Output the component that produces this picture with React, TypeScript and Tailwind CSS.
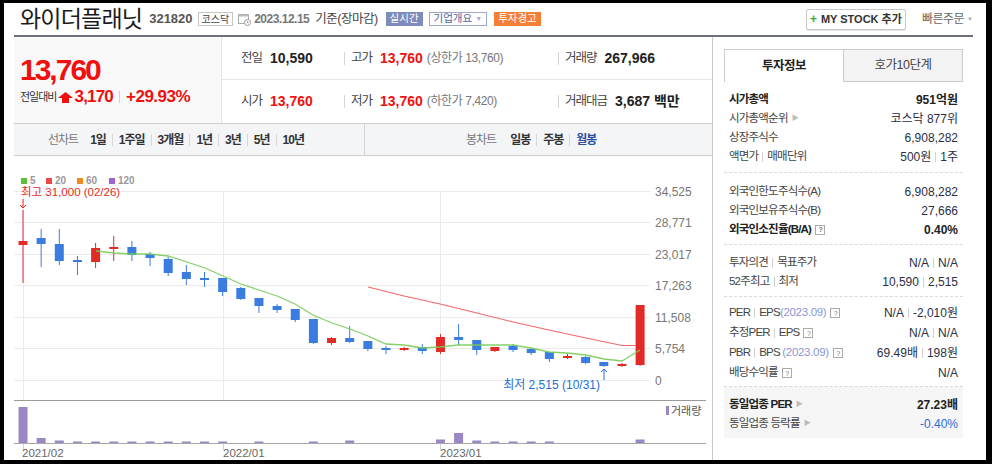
import React from "react";

// candle coords in chart pixels: [bodyTop, bodyBottom, wickTop, wickBottom, up]
const CANDLES: [number, number, number, number, boolean][] = [
  [241, 245, 210, 283, true],
  [238, 244, 229, 267, false],
  [244, 261, 229, 265, false],
  [260, 262, 256, 275, false],
  [248, 262, 243, 268, true],
  [247, 249, 236, 261, true],
  [247, 255, 241, 261, false],
  [254, 258, 252, 266, false],
  [259, 273, 257, 276, false],
  [272, 279, 265, 285, false],
  [278, 280, 272, 287, false],
  [278, 292, 278, 296, false],
  [288, 299, 287, 300, false],
  [298, 306, 298, 313, false],
  [306, 310, 304, 313, false],
  [309, 320, 309, 322, false],
  [319, 343, 319, 344, false],
  [338, 343, 337, 345, true],
  [338, 342, 326, 343, false],
  [341, 349, 341, 351, false],
  [348, 350, 346, 354, false],
  [348, 350, 347, 351, true],
  [347, 351, 344, 354, false],
  [337, 352, 334, 354, true],
  [337, 340, 324, 345, false],
  [340, 350, 340, 355, false],
  [347, 351, 347, 352, true],
  [346, 350, 344, 352, false],
  [349, 353, 348, 355, false],
  [352, 359, 352, 362, false],
  [356, 358, 354, 359, true],
  [357, 363, 356, 364, false],
  [362, 366, 362, 367, false],
  [364, 366, 363, 367, true],
  [305, 365, 305, 366, true],
];

// volume bar heights by candle index
const VOLUME: Record<number, number> = {
  0: 36, 1: 5, 2: 2.5, 3: 1.5, 4: 1.5, 5: 1.5, 6: 1.5, 7: 1.5, 8: 1.5, 9: 1.5,
  10: 1.5, 11: 1.5, 13: 1.5, 16: 1.5, 18: 2.5, 23: 3.5, 24: 10, 25: 2.5,
  26: 1.5, 27: 1.5, 28: 1.5, 29: 1.5, 34: 3.5,
};

const MA5: [number, number][] = [
  [96, 251], [114, 253], [132, 254], [150, 254], [168, 256], [187, 262],
  [205, 268], [223, 276], [241, 284], [259, 290], [277, 296], [295, 304],
  [313, 315], [332, 323], [350, 329], [368, 336], [386, 344], [404, 345],
  [422, 348], [440, 347], [458, 345], [477, 345], [495, 345], [513, 345],
  [531, 348], [549, 352], [567, 353], [586, 355], [604, 359], [622, 361],
  [640, 350],
];

const MA20: [number, number][] = [
  [368, 287], [404, 296], [440, 304], [477, 313], [513, 322], [549, 330],
  [586, 338], [622, 345.5], [640, 345.5],
];

const Y_LABELS = ["34,525", "28,771", "23,017", "17,263", "11,508", "5,754", "0"];
const GRID_Y = [191.5, 222.5, 254.5, 285.5, 317.5, 348.5, 380.5];
const V_LINES = [23.5, 223.5, 440.5];

const cx = (i: number) => 23 + i * 18.15;
const RED = "#e02b27";
const BLUE = "#3b7ce0";

const Bar = () => <span className="mx-[6px] inline-block h-[12px] w-px bg-[#d6d6d6]" />;
const Pipe = () => <span className="mx-[4px] inline-block h-[10px] w-px bg-[#d0d0d0]" />;
const Arrow = () => <span className="ml-[4px] text-[7px] text-[#bbb]">▶</span>;
const Help = () => (
  <span className="ml-[4px] inline-flex h-[10px] w-[10px] items-center justify-center border border-[#aaa] text-[7px] leading-none text-[#777]">
    ?
  </span>
);

function Header() {
  return (
    <div className="flex h-[32px] items-center pl-[6px]">
      <span className="text-[23px] tracking-[-0.8px] text-[#1b1b1b]">와이더플래닛</span>
      <span className="ml-[7px] text-[13px] font-bold text-[#555]">321820</span>
      <span className="ml-[5px] flex h-[14px] items-center border border-[#c5c5c5] px-[3px] text-[10px] text-[#444]">
        코스닥
      </span>
      <svg className="ml-[5px]" width="13" height="13" viewBox="0 0 13 13">
        <rect x="0.5" y="1.5" width="10" height="9" fill="#fff" stroke="#aaa" />
        <rect x="0.5" y="1.5" width="10" height="2" fill="#bbb" />
        <circle cx="9.5" cy="9.5" r="3" fill="#fff" stroke="#999" />
        <path d="M9.5 8v1.6h1.2" stroke="#999" fill="none" />
      </svg>
      <span className="ml-[3px] text-[12px] font-bold tracking-[-0.5px] text-[#777]">2023.12.15</span>
      <span className="ml-[6px] text-[12.5px] tracking-[-0.5px] text-[#444]">기준(장마감)</span>
      <span className="ml-[8px] flex h-[14px] items-center bg-[#7d8cba] px-[4px] text-[10.5px] text-white">
        실시간
      </span>
      <span className="ml-[6px] flex h-[14px] items-center border border-[#9ea8cc] px-[4px] text-[10.5px] text-[#4d5f9a]">
        기업개요
        <span className="ml-[3px] text-[7px] text-[#a6aed0]">▼</span>
      </span>
      <span className="ml-[7px] flex h-[14px] items-center bg-[#f47f35] px-[4px] text-[10.5px] text-white">
        투자경고
      </span>
      <button className="ml-auto flex h-[21px] w-[100px] items-center justify-center rounded-[2px] border border-[#c8c8c8] bg-white text-[11px] font-bold text-[#333] shadow-[0_1px_0_#e4e4e4]">
        <span className="mr-[4px] text-[12px] text-[#3fa535]">+</span>
        MY STOCK 추가
      </button>
      <span className="ml-[16px] text-[12px] tracking-[-0.5px] text-[#666]">빠른주문</span>
      <span className="ml-[3px] text-[6px] text-[#aaa]">▼</span>
    </div>
  );
}

function Cell({ label, value, extra, red, divider, w }: {
  label: string;
  value: string;
  extra?: string;
  red?: boolean;
  divider?: boolean;
  w: string;
}) {
  return (
    <div className={`flex items-center ${w}`}>
      {divider && <span className="mr-[6px] inline-block h-[13px] w-px bg-[#d5d5d5]" />}
      <span className="text-[12.5px] tracking-[-1px] text-[#444]">{label}</span>
      <span className={`ml-[8px] text-[14px] font-bold ${red ? "text-[#f01010]" : "text-[#222]"}`}>{value}</span>
      {extra && <span className="ml-[4px] text-[12px] tracking-[-0.4px] text-[#777]">{extra}</span>}
    </div>
  );
}

function PriceBlock() {
  return (
    <div className="flex h-[86px]">
      <div className="w-[208px] border-r border-[#e3e3e3] bg-[#f9f9f9] pl-[6px] pt-[15px]">
        <div className="text-[30px] font-bold leading-[36px] tracking-[-2px] text-[#f01010]">13,760</div>
        <div className="flex h-[18px] items-center">
          <span className="text-[11px] tracking-[-1px] text-[#333]">전일대비</span>
          <svg className="ml-[2px]" width="15" height="11" viewBox="0 0 15 11">
            <polygon points="7.5,0 15,6 11,6 11,11 4,11 4,6 0,6" fill="#f01010" />
          </svg>
          <span className="ml-[1px] text-[17px] font-bold tracking-[-0.8px] text-[#f01010]">3,170</span>
          <span className="mx-[6px] inline-block h-[12px] w-px bg-[#d0d0d0]" />
          <span className="text-[17px] font-bold tracking-[-0.5px] text-[#f01010]">+29.93%</span>
        </div>
      </div>
      <div className="flex flex-1 flex-col">
        <div className="flex h-[43px] border-b border-[#e6e6e6] pl-[19px]">
          <Cell w="w-[103px]" label="전일" value="10,590" />
          <Cell w="w-[214px]" divider label="고가" value="13,760" red extra="(상한가 13,760)" />
          <Cell w="flex-1" divider label="거래량" value="267,966" />
        </div>
        <div className="flex h-[42px] pl-[19px]">
          <Cell w="w-[103px]" label="시가" value="13,760" red />
          <Cell w="w-[214px]" divider label="저가" value="13,760" red extra="(하한가 7,420)" />
          <Cell w="flex-1" divider label="거래대금" value="3,687 백만" />
        </div>
      </div>
    </div>
  );
}

function ChartTabs() {
  const lines = ["1일", "1주일", "3개월", "1년", "3년", "5년", "10년"];
  return (
    <div className="flex h-[33px] border-y border-[#cfcfcf] bg-[#f4f5f7] text-[12px]">
      <div className="flex w-[351px] items-center border-r border-[#d3d3d3] pl-[34px]">
        <span className="mr-[12px] tracking-[-1px] text-[#777]">선차트</span>
        {lines.map((l, i) => (
          <React.Fragment key={l}>
            {i > 0 && <Bar />}
            <span className="font-bold tracking-[-1px] text-[#333]">{l}</span>
          </React.Fragment>
        ))}
      </div>
      <div className="flex flex-1 items-center pl-[101px]">
        <span className="mr-[14px] tracking-[-1px] text-[#777]">봉차트</span>
        <span className="font-bold tracking-[-1px] text-[#333]">일봉</span>
        <Bar />
        <span className="font-bold tracking-[-1px] text-[#333]">주봉</span>
        <Bar />
        <span className="font-bold tracking-[-1px] text-[#2d4ea3]">월봉</span>
      </div>
    </div>
  );
}

function Chart() {
  const legend = [
    { x: 21, label: "5", color: "#5cbf3c" },
    { x: 46, label: "20", color: "#ec4848" },
    { x: 77, label: "60", color: "#f28a1f" },
    { x: 109, label: "120", color: "#a064cc" },
  ];
  return (
    <svg
      width={698}
      height={304}
      viewBox="14 156 698 304"
      className="block font-['Liberation_Sans','Noto_Sans_CJK_KR',sans-serif]"
    >
      {GRID_Y.map((y) => (
        <line key={y} x1={14} x2={650} y1={y} y2={y} stroke="#ebebeb" />
      ))}
      {V_LINES.map((x) => (
        <g key={x}>
          <line x1={x} x2={x} y1={191} y2={400} stroke="#ebebeb" />
          <line x1={x} x2={x} y1={443} y2={450} stroke="#d5d5d5" />
        </g>
      ))}
      {Y_LABELS.map((t, i) => (
        <text key={t} x={655} y={GRID_Y[i] + 4.5} fontSize={12} fill="#777">
          {t}
        </text>
      ))}

      {legend.map((l) => (
        <g key={l.label}>
          <rect x={l.x} y={178} width={6} height={6} fill={l.color} />
          <text x={l.x + 9} y={184} fontSize={10} fontWeight={700} fill="#999">
            {l.label}
          </text>
        </g>
      ))}
      <text x={21} y={196} fontSize={11.5} fill={RED}>
        최고 31,000 (02/26)
      </text>
      <path d="M23 199V208M20 205L23 208L26 205" stroke={RED} fill="none" />

      <polyline
        points={MA20.map((p) => p.join(",")).join(" ")}
        fill="none"
        stroke="#f06868"
        strokeWidth={1.2}
      />

      {CANDLES.map(([bt, bb, wt, wb, up], i) => {
        const x = cx(i);
        const c = up ? RED : BLUE;
        return (
          <g key={i}>
            <line x1={x} x2={x} y1={wt} y2={wb} stroke={c} />
            <rect x={x - 4.5} y={bt} width={9} height={Math.max(bb - bt, 2)} fill={c} />
          </g>
        );
      })}

      <polyline
        points={MA5.map((p) => p.join(",")).join(" ")}
        fill="none"
        stroke="#78cc58"
        strokeOpacity={0.9}
        strokeWidth={1.3}
      />

      <text x={600} y={389} fontSize={12} fill="#1f6fd8" textAnchor="end">
        최저 2,515 (10/31)
      </text>
      <path d="M604 380V369M601 372L604 369L607 372" stroke="#1f6fd8" fill="none" />

      <line x1={14} x2={706} y1={400.5} y2={400.5} stroke="#9a9a9a" />
      <line x1={14} x2={706} y1={443.5} y2={443.5} stroke="#a8a8a8" />
      {Object.entries(VOLUME).map(([k, h]) => (
        <rect key={k} x={cx(Number(k)) - 4.5} y={443 - h} width={9} height={h} fill="#9a88c6" />
      ))}
      <rect x={666} y={406} width={3} height={9} fill="#9a88c6" />
      <text x={671} y={415} fontSize={11} fill="#555">
        거래량
      </text>

      {[
        { x: 22, t: "2021/02" },
        { x: 223, t: "2022/01" },
        { x: 440, t: "2023/01" },
      ].map((l) => (
        <text key={l.t} x={l.x} y={457} fontSize={11.5} fill="#666">
          {l.t}
        </text>
      ))}
    </svg>
  );
}

function Row({ label, value, strong, h = "h-[19px]" }: {
  label: React.ReactNode;
  value: React.ReactNode;
  strong?: boolean;
  h?: string;
}) {
  return (
    <div className={`flex items-center justify-between px-[5px] ${h}`}>
      <span className={`flex items-center text-[11.5px] tracking-[-0.8px] ${strong ? "font-bold text-[#222]" : "text-[#444]"}`}>
        {label}
      </span>
      <span className={`flex items-center text-[12px] ${strong ? "font-bold text-[#222]" : "text-[#2a2f45]"}`}>
        {value}
      </span>
    </div>
  );
}

const Sep = () => <div className="border-t border-dashed border-[#d9d9d9]" />;
const Period = ({ s }: { s: string }) => <span className="tracking-[-0.3px] text-[#8c96d2]">{s}</span>;

function Aside() {
  return (
    <div className="flex-1 pl-[11px] pr-[10px]">
      <div className="mt-[12px] flex h-[33px]">
        <div className="flex w-[119px] items-center justify-center border-l border-t border-[#cccccc] bg-white text-[12.5px] font-bold tracking-[-0.5px] text-[#222]">
          투자정보
        </div>
        <div className="flex flex-1 items-center justify-center border border-[#cccccc] bg-[#f3f3f3] text-[12.5px] tracking-[-0.5px] text-[#444]">
          호가10단계
        </div>
      </div>

      <div className="pb-[6px] pt-[8px]">
        <Row strong label="시가총액" value="951억원" />
        <Row label={<>시가총액순위<Arrow /></>} value="코스닥 877위" />
        <Row label="상장주식수" value="6,908,282" />
        <Row label={<>액면가<Pipe />매매단위</>} value={<>500원<Pipe />1주</>} />
      </div>
      <Sep />
      <div className="pb-[5px] pt-[9px]">
        <Row label="외국인한도주식수(A)" value="6,908,282" />
        <Row label="외국인보유주식수(B)" value="27,666" />
        <Row strong label={<>외국인소진율(B/A)<Help /></>} value="0.40%" />
      </div>
      <Sep />
      <div className="pb-[5px] pt-[8px]">
        <Row label={<>투자의견<Pipe />목표주가</>} value={<>N/A<Pipe />N/A</>} />
        <Row label={<>52주최고<Pipe />최저</>} value={<>10,590<Pipe />2,515</>} />
      </div>
      <Sep />
      <div className="pb-[3px] pt-[6px]">
        <Row h="h-[20px]" label={<>PER<Pipe />EPS<Period s="(2023.09)" /><Help /></>} value={<>N/A<Pipe />-2,010원</>} />
        <Row h="h-[20px]" label={<>추정PER<Pipe />EPS<Help /></>} value={<>N/A<Pipe />N/A</>} />
        <Row h="h-[20px]" label={<>PBR<Pipe />BPS&nbsp;<Period s="(2023.09)" /><Help /></>} value={<>69.49배<Pipe />198원</>} />
        <Row h="h-[20px]" label={<>배당수익률<Help /></>} value="N/A" />
      </div>
      <Sep />
      <div className="bg-[#f6f6f6] pb-[5px] pt-[8px]">
        <Row strong label={<>동일업종 PER<Arrow /></>} value="27.23배" />
        <Row label={<>동일업종 등락률<Arrow /></>} value={<span className="text-[#2a6bd6]">-0.40%</span>} />
      </div>
    </div>
  );
}

export default function App() {
  return (
    <div className="h-[466px] w-[992px] overflow-hidden bg-white font-['Liberation_Sans','Noto_Sans_CJK_KR',sans-serif] text-[#333]">
      <div className="flex h-[464px] flex-col border-b-[4px] border-l-[4px] border-r-[6px] border-t-[3px] border-black pl-[10px] pr-[13px]">
        <Header />
        <div className="h-[2px] bg-[#6d717a]" />
        <div className="flex flex-1">
          <div className="flex w-[699px] flex-col border-r border-[#c9c9c9]">
            <PriceBlock />
            <ChartTabs />
            <Chart />
          </div>
          <Aside />
        </div>
      </div>
    </div>
  );
}
